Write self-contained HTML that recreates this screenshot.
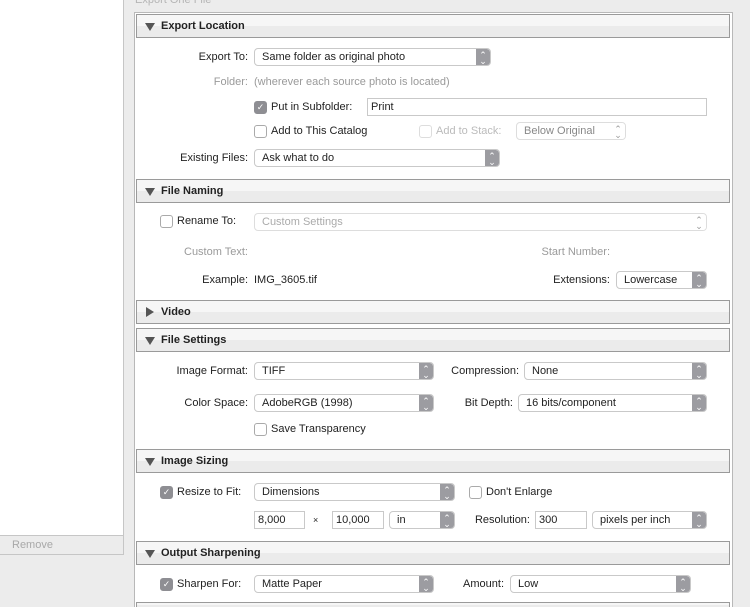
<!DOCTYPE html><html><head><style>
*{margin:0;padding:0;box-sizing:border-box}
html{width:750px;height:607px;overflow:hidden}
body{width:750px;height:607px;background:#ececec;font-family:"Liberation Sans",sans-serif;font-size:11px;color:#222;position:relative;overflow:hidden}
div,span{position:absolute}
.hd{left:136px;width:594px;height:24px;border:1px solid #9a9a9a;background:linear-gradient(#f6f6f6 50%,#ebebeb 50%);font-weight:bold;font-size:11px;line-height:22px;padding-left:24px}
.hd:before{content:"";position:absolute;left:8px;top:8px;border-left:5px solid transparent;border-right:5px solid transparent;border-top:8px solid #555}
.hd.c:before{left:9px;top:6px;border-top:5px solid transparent;border-bottom:5px solid transparent;border-left:8px solid #555;border-right:0}
.l{white-space:nowrap;line-height:13px}
.r{text-align:right}
.g{color:#9a9a9a}
.p{height:18px;border:1px solid #c9c9c9;border-radius:4px;background:#fff;line-height:16px;padding-left:7px;white-space:nowrap;overflow:hidden}
.p:after{content:"⌃\A⌄";white-space:pre;position:absolute;right:0;top:0;width:14px;height:16px;background:#9c9ca1;color:#fff;font-size:9px;line-height:6px;text-align:center;padding-top:3px;border-radius:0 3px 3px 0}
.p.d{color:#aaa;border-color:#ddd}.p.d:after{background:#fff;color:#999}
.cb{width:13px;height:13px;border:1px solid #aaa;border-radius:3px;background:#fff}
.cb.on{background:#8e8e93;border-color:#8e8e93;color:#fff;font-size:9px;line-height:11px;text-align:center}
.cb.d{border-color:#ddd}
.f{height:18px;border:1px solid #c9c9c9;background:#fff;line-height:16px;padding-left:3px}
</style></head><body>
<div style="left:0;top:0;width:124px;height:535px;background:#fff;border-right:1px solid #c6c6c6"></div>
<div style="left:0;top:535px;width:124px;height:20px;background:#ececec;border:1px solid #c6c6c6;border-left:0;color:#a8a8a8;line-height:18px;padding-left:12px">Remove</div>
<div class="l g" style="left:135px;top:-6px;color:#b5b5b5">Export One File</div>
<div style="left:134px;top:12px;width:599px;height:595px;background:#fff;border:1px solid #b8b8b8;border-bottom:0"></div>

<div class="hd" style="top:14px">Export Location</div>
<div class="l r" style="left:150px;width:98px;top:51px">Export To:</div>
<div class="p" style="left:254px;top:48px;width:237px">Same folder as original photo</div>
<div class="l r g" style="left:150px;width:98px;top:76px">Folder:</div>
<div class="l g" style="left:254px;top:76px">(wherever each source photo is located)</div>
<div class="cb on" style="left:254px;top:101px">✓</div><div class="l" style="left:271px;top:101px">Put in Subfolder:</div>
<div class="f" style="left:367px;top:98px;width:340px">Print</div>
<div class="cb" style="left:254px;top:125px"></div><div class="l" style="left:271px;top:125px">Add to This Catalog</div>
<div class="cb d" style="left:419px;top:125px"></div><div class="l g" style="left:436px;top:125px;color:#bbb">Add to Stack:</div>
<div class="p d" style="left:516px;top:122px;width:110px;color:#888">Below Original</div>
<div class="l r" style="left:150px;width:98px;top:152px">Existing Files:</div>
<div class="p" style="left:254px;top:149px;width:246px">Ask what to do</div>

<div class="hd" style="top:179px">File Naming</div>
<div class="cb" style="left:160px;top:215px"></div><div class="l" style="left:177px;top:215px">Rename To:</div>
<div class="p d" style="left:254px;top:213px;width:453px">Custom Settings</div>
<div class="l r g" style="left:150px;width:98px;top:246px">Custom Text:</div>
<div class="l r g" style="left:500px;width:110px;top:246px">Start Number:</div>
<div class="l r" style="left:150px;width:98px;top:274px">Example:</div>
<div class="l" style="left:254px;top:274px">IMG_3605.tif</div>
<div class="l r" style="left:500px;width:110px;top:274px">Extensions:</div>
<div class="p" style="left:616px;top:271px;width:91px">Lowercase</div>

<div class="hd c" style="top:300px">Video</div>
<div class="hd" style="top:328px">File Settings</div>
<div class="l r" style="left:150px;width:98px;top:365px">Image Format:</div>
<div class="p" style="left:254px;top:362px;width:180px">TIFF</div>
<div class="l r" style="left:420px;width:99px;top:365px">Compression:</div>
<div class="p" style="left:524px;top:362px;width:183px">None</div>
<div class="l r" style="left:150px;width:98px;top:397px">Color Space:</div>
<div class="p" style="left:254px;top:394px;width:180px">AdobeRGB (1998)</div>
<div class="l r" style="left:420px;width:93px;top:397px">Bit Depth:</div>
<div class="p" style="left:518px;top:394px;width:189px">16 bits/component</div>
<div class="cb" style="left:254px;top:423px"></div><div class="l" style="left:271px;top:423px">Save Transparency</div>

<div class="hd" style="top:449px">Image Sizing</div>
<div class="cb on" style="left:160px;top:486px">✓</div><div class="l" style="left:177px;top:486px">Resize to Fit:</div>
<div class="p" style="left:254px;top:483px;width:201px">Dimensions</div>
<div class="cb" style="left:469px;top:486px"></div><div class="l" style="left:486px;top:486px">Don't Enlarge</div>
<div class="f" style="left:254px;top:511px;width:51px">8,000</div>
<div class="l" style="left:313px;top:514px;font-size:9px">×</div>
<div class="f" style="left:332px;top:511px;width:52px">10,000</div>
<div class="p" style="left:389px;top:511px;width:66px">in</div>
<div class="l r" style="left:440px;width:90px;top:514px">Resolution:</div>
<div class="f" style="left:535px;top:511px;width:52px">300</div>
<div class="p" style="left:592px;top:511px;width:115px">pixels per inch</div>

<div class="hd" style="top:541px">Output Sharpening</div>
<div class="cb on" style="left:160px;top:578px">✓</div><div class="l" style="left:177px;top:578px">Sharpen For:</div>
<div class="p" style="left:254px;top:575px;width:180px">Matte Paper</div>
<div class="l r" style="left:420px;width:84px;top:578px">Amount:</div>
<div class="p" style="left:510px;top:575px;width:181px">Low</div>
<div class="hd" style="top:602px;height:5px;border-bottom:0"></div>
</body></html>
